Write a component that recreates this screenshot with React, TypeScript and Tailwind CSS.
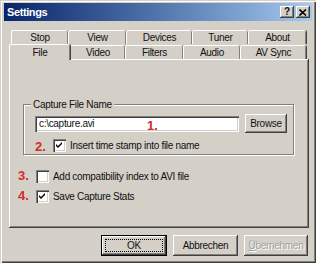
import React from "react";

const raised =
  "shadow-[inset_-1px_-1px_0_#404040,inset_1px_1px_0_#ffffff,inset_-2px_-2px_0_#808080]";

function Check({ checked }: { checked: boolean }) {
  return (
    <div className="w-[13px] h-[13px] bg-white shrink-0 shadow-[inset_1px_1px_0_#808080,inset_2px_2px_0_#404040,inset_-1px_-1px_0_#ffffff,inset_-2px_-2px_0_#d4d0c8] flex items-center justify-center">
      {checked && (
        <svg width="7" height="7" viewBox="0 0 7 7">
          <path d="M0 2 L2 4 L6 0 L6 2 L2 6 L0 4 Z" fill="#000" />
        </svg>
      )}
    </div>
  );
}

function Num({ n }: { n: string }) {
  return (
    <span className="font-bold text-[13px] tracking-normal text-[#d42a2a] leading-none">{n}</span>
  );
}

function Tab({ label, w, selected }: { label: string; w: string; selected?: boolean }) {
  return (
    <div
      className={`${w} h-[14px] flex items-center justify-center rounded-t-[2px] border-t border-l border-white shadow-[inset_-1px_0_0_#808080,1px_0_0_#404040] ${
        selected ? "relative z-10 h-[16px] -mb-[1px] bg-[#d4d0c8]" : ""
      }`}
    >
      <span className="leading-none">{label}</span>
    </div>
  );
}

export default function App() {
  return (
    <div className="w-[316px] h-[263px] bg-[#d4d0c8] p-[3px] overflow-hidden font-['Liberation_Sans',Arial,sans-serif] text-[10px] tracking-[-0.3px] text-[#111] shadow-[inset_1px_1px_0_#d4d0c8,inset_2px_2px_0_#ffffff,inset_-1px_-1px_0_#404040,inset_-2px_-2px_0_#808080]">
      {/* Title bar */}
      <div className="h-[18px] ml-[1px] mr-[1px] flex items-center bg-gradient-to-r from-[#0a246a] to-[#a6caf0] pl-[3px] pr-[2px]">
        <span className="text-white font-bold text-[11px] tracking-[-0.4px] leading-none">Settings</span>
        <div className="ml-auto flex gap-[2px]">
          <div className={`w-[14px] h-[12px] bg-[#d4d0c8] ${raised} flex items-center justify-center font-bold text-[10px] leading-none`}>
            ?
          </div>
          <div className={`w-[14px] h-[12px] bg-[#d4d0c8] ${raised} flex items-center justify-center`}>
            <svg width="8" height="7" viewBox="0 0 8 7">
              <path d="M0.5 0.5 L7 6.5 M7 0.5 L0.5 6.5" stroke="#000" strokeWidth="1.6" />
            </svg>
          </div>
        </div>
      </div>

      {/* Tabs */}
      <div className="mt-[9px] ml-[8px] flex">
        <Tab label="Stop" w="w-[57px]" />
        <Tab label="View" w="w-[58px]" />
        <Tab label="Devices" w="w-[66px]" />
        <Tab label="Tuner" w="w-[56px]" />
        <Tab label="About" w="w-[58px]" />
      </div>
      <div className="ml-[6px] flex items-end">
        <Tab label="File" w="w-[61px]" selected />
        <Tab label="Video" w="w-[55px]" />
        <Tab label="Filters" w="w-[58px]" />
        <Tab label="Audio" w="w-[57px]" />
        <Tab label="AV Sync" w="w-[66px]" />
      </div>

      {/* Panel */}
      <div className={`ml-[6px] w-[300px] h-[169px] ${raised} pt-[45px] pl-[14px]`}>
        {/* Group box */}
        <div className="relative w-[271px] h-[51px] border border-[#808080] shadow-[inset_1px_1px_0_#ffffff,1px_1px_0_#ffffff] pt-[9px] pl-[11px]">
          <span className="absolute -top-[7px] left-[7px] bg-[#d4d0c8] px-[2px] leading-[13px]">
            Capture File Name
          </span>
          <div className="flex items-center gap-[6px]">
            <div className="relative w-[204px] h-[16px] bg-white shadow-[inset_1px_1px_0_#808080,inset_2px_2px_0_#404040,inset_-1px_-1px_0_#ffffff,inset_-2px_-2px_0_#d4d0c8] flex items-center pl-[4px]">
              <span className="leading-none">c:\capture.avi</span>
              <span className="absolute left-[112px] top-[3px]">
                <Num n="1." />
              </span>
            </div>
            <div className={`w-[42px] h-[19px] bg-[#d4d0c8] ${raised} flex items-center justify-center`}>
              <span className="leading-none">Browse</span>
            </div>
          </div>
          <div className="mt-[6px] flex items-center h-[13px]">
            <span className="w-[18px] pt-[4px]">
              <Num n="2." />
            </span>
            <Check checked />
            <span className="ml-[4px] leading-none">Insert time stamp into file name</span>
          </div>
        </div>

        <div className="mt-[15px] -ml-[5px] flex items-center h-[13px]">
          <span className="w-[18px]">
            <Num n="3." />
          </span>
          <Check checked={false} />
          <span className="ml-[4px] leading-none">Add compatibility index to AVI file</span>
        </div>
        <div className="mt-[7px] -ml-[5px] flex items-center h-[13px]">
          <span className="w-[18px]">
            <Num n="4." />
          </span>
          <Check checked />
          <span className="ml-[4px] leading-none">Save Capture Stats</span>
        </div>
      </div>

      {/* Buttons */}
      <div className="mt-[7px] flex justify-end gap-[6px] pr-[5px]">
        <div className="w-[66px] h-[21px] border border-black bg-[#d4d0c8] p-[0px]">
          <div className={`w-full h-full ${raised} p-[3px]`}>
            <div className="w-full h-full border border-dotted border-black flex items-center justify-center">
              <span className="leading-none">OK</span>
            </div>
          </div>
        </div>
        <div className={`w-[65px] h-[21px] bg-[#d4d0c8] ${raised} flex items-center justify-center`}>
          <span className="leading-none">Abbrechen</span>
        </div>
        <div className={`w-[64px] h-[21px] bg-[#d4d0c8] ${raised} flex items-center justify-center`}>
          <span className="leading-none text-[#a0a0a0] [text-shadow:1px_1px_0_#ffffff]">
            <span className="underline">Ü</span>bernehmen
          </span>
        </div>
      </div>
    </div>
  );
}
